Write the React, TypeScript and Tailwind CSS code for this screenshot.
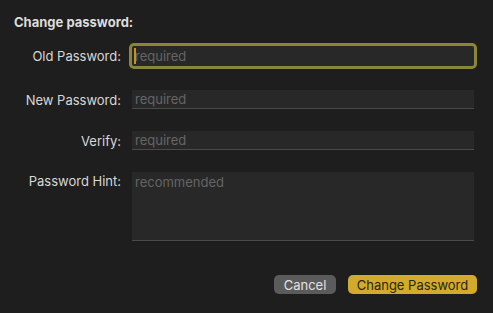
import React from "react";

const font = { fontFamily: "Inter, 'Noto Sans', sans-serif" };

function Field({ placeholder, focused = false, tall = false }: { placeholder: string; focused?: boolean; tall?: boolean }) {
  return (
    <div
      className={
        "relative w-[342px] bg-[#282828] " +
        (focused
          ? "h-[20px] rounded-[2px] outline outline-[3px] outline-[#8a8538]"
          : tall
          ? "h-[69px] border-b border-[#4a4a4a]"
          : "h-[19px] border-b border-[#4a4a4a]")
      }
    >
      {focused && <span className="absolute left-[2px] top-[2px] h-[16px] w-[2px] bg-[#c8912c]" />}
      <span className={"absolute left-[3px] text-[13px] leading-[16px] text-[#656565] " + (tall ? "top-[2px]" : focused ? "top-[2px]" : "top-[1px]")}>
        {placeholder}
      </span>
    </div>
  );
}

function Label({ children, top = false }: { children: React.ReactNode; top?: boolean }) {
  return (
    <div className={"w-[121px] text-right text-[13px] leading-[16px] text-[#d8d8d8] " + (top ? "pt-[1px] self-start" : "")}>
      {children}
    </div>
  );
}

export default function App() {
  return (
    <div className="w-[493px] h-[313px] bg-[#1e1e1e] flex flex-col pt-[14px]" style={font}>
      <div className="pl-[14px] text-[13px] leading-[16px] font-bold text-[#dcdcdc]">Change password:</div>
      <div className="flex items-center gap-[11px] mt-[16px]">
        <Label>Old Password:</Label>
        <Field placeholder="required" focused />
      </div>
      <div className="flex items-center gap-[11px] mt-[24px]">
        <Label>New Password:</Label>
        <Field placeholder="required" />
      </div>
      <div className="flex items-center gap-[11px] mt-[22px]">
        <Label>Verify:</Label>
        <Field placeholder="required" />
      </div>
      <div className="flex gap-[11px] mt-[22px]">
        <Label top>Password Hint:</Label>
        <Field placeholder="recommended" tall />
      </div>
      <div className="flex justify-end gap-[12px] mt-[34px] pr-[16px]">
        <button className="w-[62px] h-[19px] rounded-[5px] bg-[#5b5b5b] text-[13px] leading-[16px] text-[#e2e2e2]">Cancel</button>
        <button className="w-[129px] h-[19px] rounded-[5px] bg-[#d3ab2c] text-[13px] leading-[16px] text-[#2a2412]">Change Password</button>
      </div>
    </div>
  );
}
